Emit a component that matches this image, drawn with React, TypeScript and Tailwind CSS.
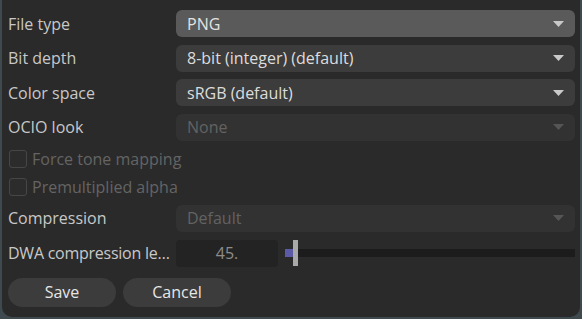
import React from 'react';

type Opt = { label: string; value: string; disabled?: boolean; active?: boolean };

const OPTIONS: Opt[] = [
  { label: 'File type', value: 'PNG', active: true },
  { label: 'Bit depth', value: '8-bit (integer) (default)' },
  { label: 'Color space', value: 'sRGB (default)' },
  { label: 'OCIO look', value: 'None', disabled: true },
];

function Caret({ dim }: { dim?: boolean }) {
  return (
    <svg width="11" height="6" viewBox="0 0 11 6" className="shrink-0">
      <path d="M0 0 H11 L5.5 6 Z" fill={dim ? '#555555' : '#c9c9c9'} />
    </svg>
  );
}

function Select({ value, disabled, active }: { value: string; disabled?: boolean; active?: boolean }) {
  return (
    <div
      className={
        'flex-1 h-[27px] rounded-[6px] flex items-center justify-between pl-[11px] pr-[11px] ' +
        (active ? 'bg-[#5a5a5a] text-[#e2e2e2]' : disabled ? 'bg-[#323232] text-[#626262]' : 'bg-[#3c3c3c] text-[#dcdcdc]')
      }
    >
      <span>{value}</span>
      <Caret dim={disabled} />
    </div>
  );
}

function Row({ label, tight, children }: { label: string; tight?: boolean; children: React.ReactNode }) {
  return (
    <div className="flex items-center h-[27px]">
      <div className={'w-[168px] shrink-0 text-[#c8c8c8] whitespace-nowrap' + (tight ? ' tracking-[-0.25px]' : '')}>
        {label}
      </div>
      {children}
    </div>
  );
}

function Check({ label }: { label: string }) {
  return (
    <div className="flex items-center h-[28px] pl-[1px] gap-[5px] text-[#646464]">
      <div className="w-[18px] h-[18px] rounded-[3px] border border-[#464646] bg-[#2c2c2c]" />
      <span>{label}</span>
    </div>
  );
}

export default function App() {
  return (
    <div
      className="w-[582px] h-[319px] bg-[#3f4a4e] px-[2px] pb-[2px]"
      style={{ fontFamily: '"Open Sans", "Noto Sans", sans-serif' }}
    >
      <div className="h-full bg-[#2a2a2a] rounded-b-[10px] pl-[6px] pr-[5px] pt-[10px] text-[16px] leading-[22px] flex flex-col">
        <div className="flex flex-col gap-[7.5px]">
          {OPTIONS.map((o) => (
            <Row key={o.label} label={o.label}>
              <Select value={o.value} disabled={o.disabled} active={o.active} />
            </Row>
          ))}
        </div>
        <div className="flex flex-col mt-[4px]">
          <Check label="Force tone mapping" />
          <Check label="Premultiplied alpha" />
        </div>
        <div className="flex flex-col gap-[8px] mt-[4px]">
          <Row label="Compression">
            <Select value="Default" disabled />
          </Row>
          <Row label="DWA compression le…" tight>
            <div className="w-[102px] h-[27px] rounded-[4px] bg-[#232323] text-[#8c8c8c] flex items-center justify-center">
              45.
            </div>
            <div className="flex-1 h-[27px] ml-[7px] flex items-center">
              <div className="w-[8px] h-[8px] bg-[#5a5aa6]" />
              <div className="w-[5px] h-[26px] bg-[#a9a9a9]" />
              <div className="flex-1 h-[8px] bg-[#1c1c1c]" />
            </div>
          </Row>
        </div>
        <div className="flex gap-[7px] mt-[11px]">
          <button className="w-[108px] h-[29px] rounded-full bg-[#3c3c3c] text-[#e6e6e6]">Save</button>
          <button className="w-[108px] h-[29px] rounded-full bg-[#3c3c3c] text-[#e6e6e6]">Cancel</button>
        </div>
      </div>
    </div>
  );
}
